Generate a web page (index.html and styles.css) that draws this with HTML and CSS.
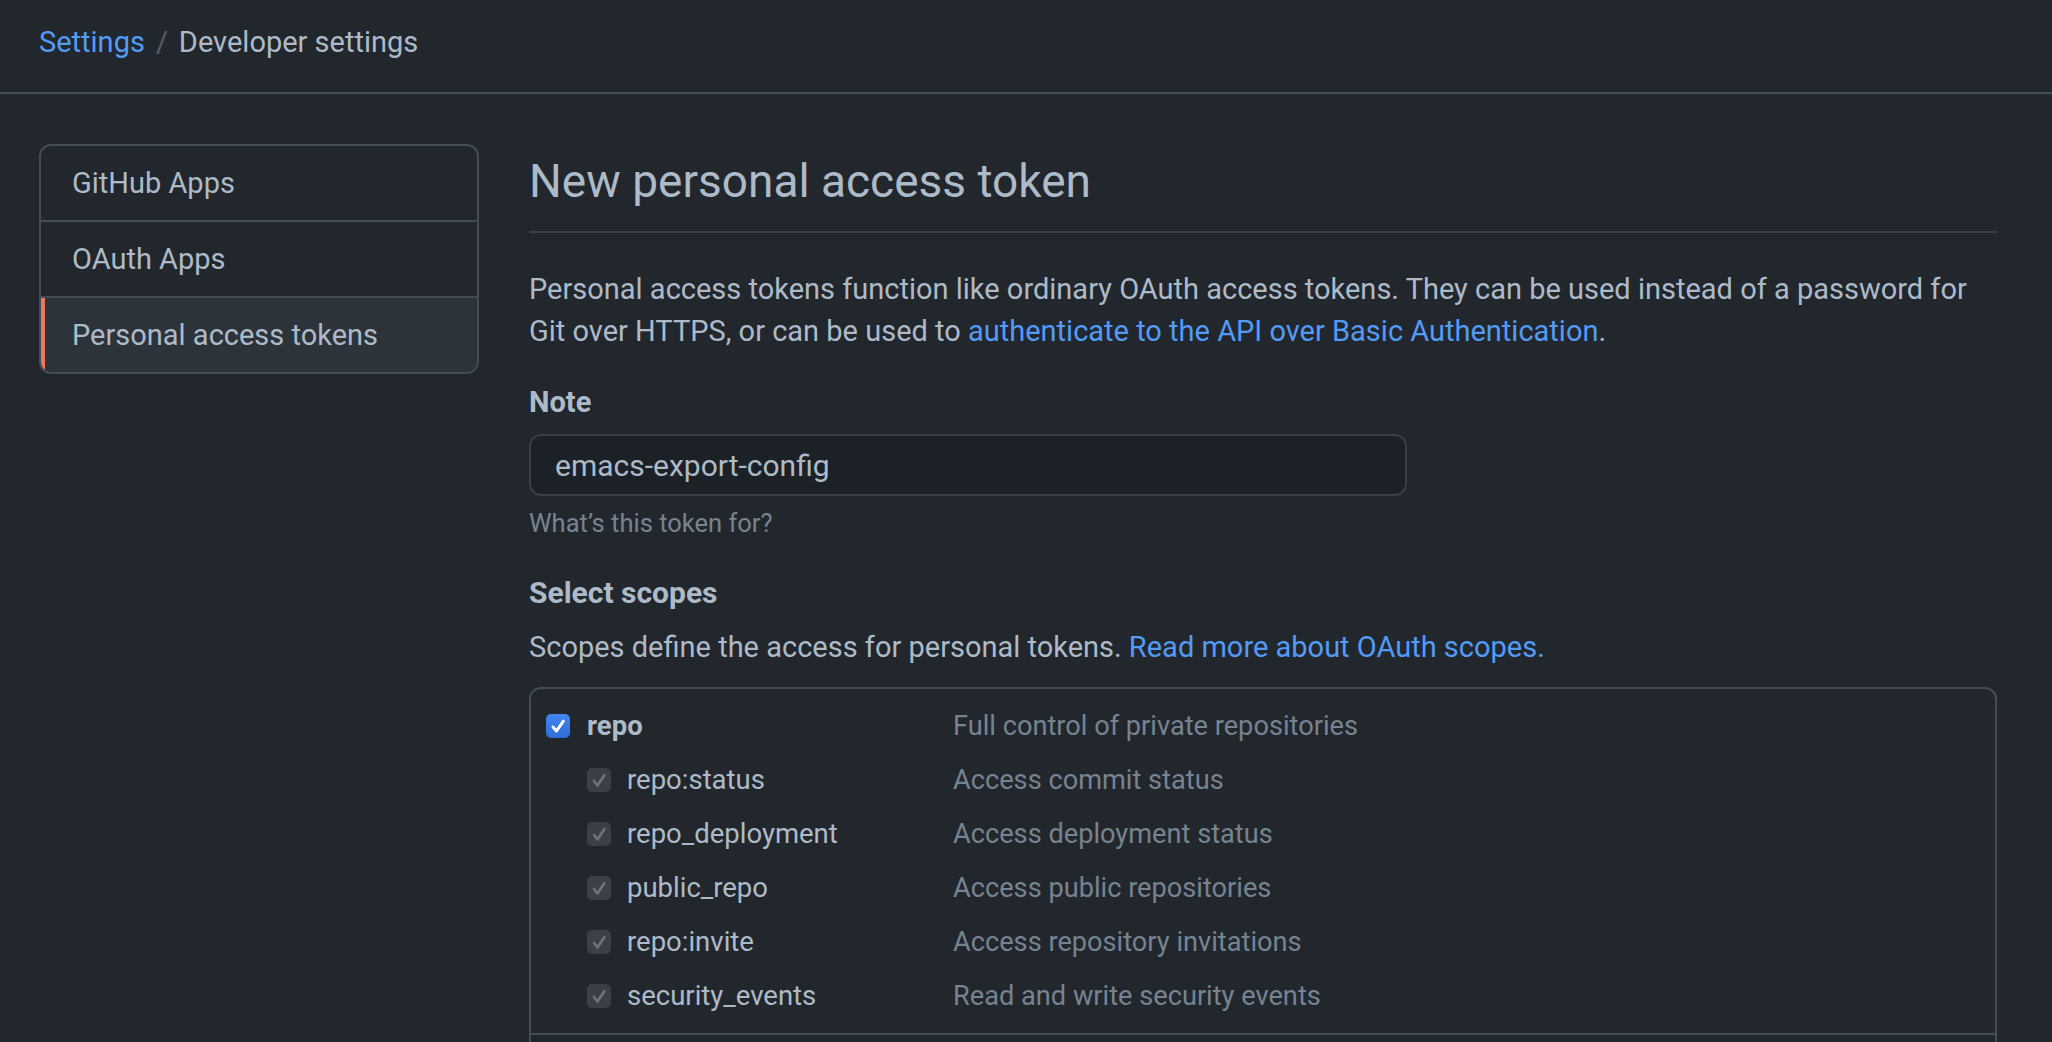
FILE: index.html
```html
<!DOCTYPE html>
<html>
<head>
  <link rel="stylesheet" href="styles.css">
</head>
<body>
  <!-- Breadcrumb header -->
  <header class="page-head">
    <nav class="crumbs">
      <a class="crumb-link" href="#">Settings</a>
      <span class="crumb-sep">/</span>
      <span class="crumb-current">Developer settings</span>
    </nav>
  </header>

  <div class="layout">
    <!-- Side menu -->
    <nav class="menu">
      <a class="menu-item" href="#">GitHub Apps</a>
      <a class="menu-item" href="#">OAuth Apps</a>
      <a class="menu-item selected" href="#">Personal access tokens</a>
    </nav>

    <main class="content">
      <div class="subhead">
        <h2 class="subhead-heading">New personal access token</h2>
      </div>

      <p class="intro">Personal access tokens function like ordinary OAuth access tokens. They can be used instead of a password for Git over HTTPS, or can be used to <a class="link" href="#">authenticate to the API over Basic Authentication</a>.</p>

      <form class="token-form">
        <div class="form-group">
          <label class="form-label" for="note">Note</label>
          <input class="form-control" id="note" type="text" value="emacs-export-config">
          <p class="note">What’s this token for?</p>
        </div>

        <h3 class="scopes-title">Select scopes</h3>
        <p class="scopes-intro">Scopes define the access for personal tokens. <a class="link" href="#">Read more about OAuth scopes.</a></p>

        <div class="scopes">
          <div class="scope-group">
            <div class="scope-row">
              <div class="scope-name">
                <span class="check on"><svg viewBox="0 0 24 24"><path d="M7 13 L10.5 17 L17.3 7.2"/></svg></span>
                <span class="scope-label parent">repo</span>
              </div>
              <span class="scope-desc">Full control of private repositories</span>
            </div>
            <div class="scope-row">
              <div class="scope-name child">
                <span class="check off"><svg viewBox="0 0 24 24"><path d="M7 13 L10.5 17.5 L17.3 7.2"/></svg></span>
                <span class="scope-label">repo:status</span>
              </div>
              <span class="scope-desc">Access commit status</span>
            </div>
            <div class="scope-row">
              <div class="scope-name child">
                <span class="check off"><svg viewBox="0 0 24 24"><path d="M7 13 L10.5 17.5 L17.3 7.2"/></svg></span>
                <span class="scope-label">repo_deployment</span>
              </div>
              <span class="scope-desc">Access deployment status</span>
            </div>
            <div class="scope-row">
              <div class="scope-name child">
                <span class="check off"><svg viewBox="0 0 24 24"><path d="M7 13 L10.5 17.5 L17.3 7.2"/></svg></span>
                <span class="scope-label">public_repo</span>
              </div>
              <span class="scope-desc">Access public repositories</span>
            </div>
            <div class="scope-row">
              <div class="scope-name child">
                <span class="check off"><svg viewBox="0 0 24 24"><path d="M7 13 L10.5 17.5 L17.3 7.2"/></svg></span>
                <span class="scope-label">repo:invite</span>
              </div>
              <span class="scope-desc">Access repository invitations</span>
            </div>
            <div class="scope-row">
              <div class="scope-name child">
                <span class="check off"><svg viewBox="0 0 24 24"><path d="M7 13 L10.5 17.5 L17.3 7.2"/></svg></span>
                <span class="scope-label">security_events</span>
              </div>
              <span class="scope-desc">Read and write security events</span>
            </div>
          </div>
          <div class="scope-group last"></div>
        </div>
      </form>
    </main>
  </div>
</body>
</html>
```

FILE: styles.css
```css
body {
  margin: 0;
  background-color: #22272e;
  color: #adbac7;
  font-family: Roboto, 'Liberation Sans', Arial, sans-serif;
  font-size: 28px;
  line-height: 42px;
  overflow: hidden;
}
a {
  text-decoration: none;
}
.link {
  color: #539bf5;
}

/* Header */
.page-head {
  height: 94px;
  box-sizing: border-box;
  padding: 21px 39px 0;
  border-bottom: 2px solid #444c56;
}
.crumbs {
  display: flex;
  align-items: center;
  gap: 11px;
  font-size: 29px;
  line-height: 42px;
}
.crumb-link {
  color: #539bf5;
}
.crumb-sep {
  color: #545d68;
}
.crumb-current {
  color: #adbac7;
}

/* Layout */
.layout {
  display: flex;
  gap: 50px;
  padding: 50px 55px 0 39px;
}
.menu {
  width: 440px;
  flex-shrink: 0;
  align-self: flex-start;
  border: 2px solid #444c56;
  border-radius: 12px;
  overflow: hidden;
  box-sizing: border-box;
}
.menu-item {
  display: flex;
  align-items: center;
  height: 74px;
  padding-left: 31px;
  color: #adbac7;
  font-size: 29px;
  border-bottom: 2px solid #444c56;
}
.menu-item:last-child {
  border-bottom: none;
}
.menu-item.selected {
  background-color: #2d333b;
  box-shadow: inset 4px 0 0 #ec775c;
}

/* Content */
.content {
  flex: 1;
  min-width: 0;
}
.subhead {
  padding-bottom: 15px;
  border-bottom: 2px solid #373e47;
  margin-bottom: 35px;
}
.subhead-heading {
  margin: 0;
  padding-top: 2px;
  font-size: 46px;
  font-weight: 400;
  line-height: 70px;
}
.intro {
  margin: 0 0 29px;
  font-size: 29px;
}
.form-label {
  display: block;
  font-size: 29px;
  font-weight: 700;
}
.form-control {
  display: block;
  width: 878px;
  height: 62px;
  margin-top: 11px;
  box-sizing: border-box;
  padding: 0 24px;
  background-color: #1c2128;
  border: 2px solid #373e47;
  border-radius: 12px;
  color: #adbac7;
  font-family: inherit;
  font-size: 30px;
  outline: none;
}
.note {
  margin: 9px 0 0;
  font-size: 25.5px;
  line-height: 36px;
  color: #768390;
}
.scopes-title {
  margin: 31px 0 0;
  font-size: 30px;
  line-height: 42px;
  font-weight: 700;
}
.scopes-intro {
  margin: 12px 0 0;
  font-size: 29px;
}

/* Scopes table */
.scopes {
  margin-top: 19px;
  border: 2px solid #444c56;
  border-radius: 12px;
}
.scope-group {
  padding: 10px 0 10px 15px;
  border-bottom: 2px solid #444c56;
}
.scope-group.last {
  height: 120px;
  border-bottom: none;
}
.scope-row {
  display: grid;
  grid-template-columns: 407px 1fr;
  align-items: center;
  height: 54px;
}
.scope-name {
  display: flex;
  align-items: center;
  gap: 17px;
  font-size: 27.5px;
}
.scope-name.child {
  padding-left: 41px;
  gap: 16px;
}
.scope-label.parent {
  font-weight: 700;
}
.scope-desc {
  color: #768390;
  font-size: 27.2px;
}
.check {
  display: inline-flex;
  width: 24px;
  height: 24px;
  border-radius: 5px;
  box-sizing: border-box;
}
.check svg {
  width: 24px;
  height: 24px;
  fill: none;
  stroke-linecap: round;
  stroke-linejoin: round;
}
.check.on {
  background: linear-gradient(#4585ee, #2f6dd8);
}
.check.on svg {
  stroke: #ffffff;
  stroke-width: 3;
}
.check.off {
  background-color: #3c3f45;
}
.check.off svg {
  stroke: #6f7379;
  stroke-width: 2.6;
}
```
